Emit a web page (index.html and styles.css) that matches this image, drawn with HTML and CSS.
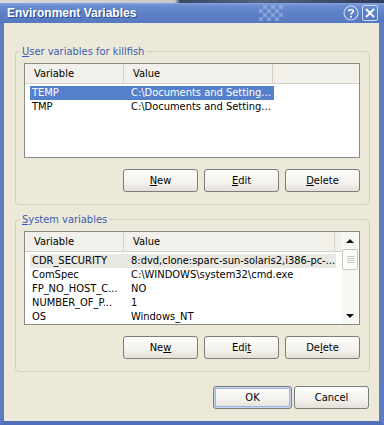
FILE: index.html
```html
<!DOCTYPE html>
<html lang="en">
<head>
    <meta charset="UTF-8">
    <meta name="viewport" content="width=device-width, initial-scale=1.0">
    <title>Environment Variables</title>
    <link rel="stylesheet" href="styles.css">
</head>
<body>
    <div class="desktop-strip"></div>
    <div class="window">
        <div class="titlebar">
            <span class="title">Environment Variables</span>
            <span class="checker"></span>
            <span class="title-buttons">
                <svg class="tb-btn" width="16" height="16" viewBox="0 0 16 16">
                    <circle cx="8" cy="8" r="7" fill="none" stroke="#e4ecfa" stroke-width="1.2" opacity="0.8"/>
                    <path d="M5.6 6.2 C5.6 4.2 10.4 4.2 10.4 6.2 C10.4 7.6 8 7.8 8 9.6" fill="none" stroke="#fff" stroke-width="1.6"/>
                    <rect x="7.1" y="10.8" width="1.8" height="1.8" fill="#fff"/>
                </svg>
                <svg class="tb-btn" width="16" height="16" viewBox="0 0 16 16">
                    <rect x="0.5" y="0.5" width="15" height="15" rx="1.5" fill="none" stroke="#e4ecfa" stroke-width="1" opacity="0.8"/>
                    <path d="M4 4 L12 12 M12 4 L4 12" stroke="#fff" stroke-width="1.8"/>
                </svg>
            </span>
        </div>

        <div class="content">
            <fieldset class="group">
                <legend><u>U</u>ser variables for killfish</legend>
                <div class="list">
                    <div class="list-main">
                        <div class="list-head">
                            <span class="col-var">Variable</span>
                            <span class="col-val user-val">Value</span>
                            <span class="col-fill"></span>
                        </div>
                        <div class="row selected">
                            <span class="cell-var">TEMP</span>
                            <span class="cell-val user-val">C:\Documents and Setting...</span>
                        </div>
                        <div class="row">
                            <span class="cell-var">TMP</span>
                            <span class="cell-val user-val">C:\Documents and Setting...</span>
                        </div>
                    </div>
                </div>
                <div class="btn-row">
                    <button class="btn"><u>N</u>ew</button>
                    <button class="btn"><u>E</u>dit</button>
                    <button class="btn"><u>D</u>elete</button>
                </div>
            </fieldset>

            <fieldset class="group group-sys">
                <legend><u>S</u>ystem variables</legend>
                <div class="list list-sys">
                    <div class="list-main">
                        <div class="list-head">
                            <span class="col-var">Variable</span>
                            <span class="col-val sys-val">Value</span>
                        </div>
                        <div class="row inactive">
                            <span class="cell-var">CDR_SECURITY</span>
                            <span class="cell-val sys-val">8:dvd,clone:sparc-sun-solaris2,i386-pc-...</span>
                        </div>
                        <div class="row">
                            <span class="cell-var">ComSpec</span>
                            <span class="cell-val sys-val">C:\WINDOWS\system32\cmd.exe</span>
                        </div>
                        <div class="row">
                            <span class="cell-var">FP_NO_HOST_C...</span>
                            <span class="cell-val sys-val">NO</span>
                        </div>
                        <div class="row">
                            <span class="cell-var">NUMBER_OF_P...</span>
                            <span class="cell-val sys-val">1</span>
                        </div>
                        <div class="row">
                            <span class="cell-var">OS</span>
                            <span class="cell-val sys-val">Windows_NT</span>
                        </div>
                    </div>
                    <div class="scrollbar">
                        <div class="sb-arrow"><span class="tri-up"></span></div>
                        <div class="sb-track">
                            <div class="sb-thumb"><span></span><span></span><span></span><span></span></div>
                        </div>
                        <div class="sb-arrow"><span class="tri-down"></span></div>
                    </div>
                </div>
                <div class="btn-row">
                    <button class="btn">Ne<u>w</u></button>
                    <button class="btn">Edi<u>t</u></button>
                    <button class="btn">De<u>l</u>ete</button>
                </div>
            </fieldset>

            <div class="dialog-btns">
                <button class="btn btn-default">OK</button>
                <button class="btn">Cancel</button>
            </div>
        </div>
    </div>
</body>
</html>
```

FILE: styles.css
```css
* {
  margin: 0;
  padding: 0;
  box-sizing: border-box;
}

body {
  width: 384px;
  height: 425px;
  overflow: hidden;
  font-family: "DejaVu Sans Condensed", "Liberation Sans", sans-serif;
  font-size: 11px;
  color: #000;
  background-color: #ece9d8;
}

/* Strip of desktop above the window */
.desktop-strip {
  height: 3px;
  background: linear-gradient(to right, #d8d8d4 0, #c8c8c4 175px, #3a4868 180px, #55627f 260px, #2e3a58 100%);
}

/* Window frame and title bar */
.window {
  height: 422px;
  display: flex;
  flex-direction: column;
  border-left: 4px solid #5a7cc2;
  border-right: 5px solid #5a7cc2;
  border-bottom: 4px solid #4f70b8;
  background-color: #ece9d8;
}

.titlebar {
  height: 20px;
  margin: 0 -5px 0 -4px;
  padding: 0 6px 0 7px;
  display: flex;
  align-items: center;
  background: linear-gradient(#86a3dc 0, #6a8ccf 3px, #5d80c6 50%, #5778c0 100%);
}

.title {
  font-family: "Liberation Sans", sans-serif;
  font-weight: bold;
  font-size: 12px;
  color: #fff;
  text-shadow: 1px 1px 0 #2c4a8c;
}

.checker {
  width: 24px;
  height: 16px;
  margin-left: 123px;
  opacity: 0.35;
  background-image: conic-gradient(#c8d8f4 25%, transparent 0 50%, #c8d8f4 0 75%, transparent 0);
  background-size: 8px 8px;
}

.title-buttons {
  margin-left: auto;
  display: flex;
  gap: 3px;
}

.tb-btn {
  display: block;
}

/* Content area */
.content {
  flex: 1;
  padding: 22px 9px 0 11px;
}

.group {
  border: 1px solid #d0d0bf;
  border-radius: 4px;
  padding: 5px 9px 12px 8px;
  min-width: 0;
}

.group legend {
  margin-left: -4px;
  padding: 0 2px;
  color: #3a5cb4;
  line-height: 13px;
}

.group-sys {
  margin-top: 8px;
}

/* List views */
.list {
  height: 95px;
  display: flex;
  background: #fff;
  border: 1px solid #8a8a86;
}

.list-sys {
  height: 94px;
}

.list-main {
  flex: 1;
  overflow: hidden;
}

.list-head {
  height: 20px;
  display: flex;
  background: #f1f0ea;
  border-bottom: 1px solid #d5d2c4;
  margin-bottom: 2px;
}

.list-head span {
  padding-left: 9px;
  line-height: 19px;
  border-right: 1px solid #d5d2c4;
}

.col-var {
  width: 99px;
}

.user-val {
  width: 149px;
}

.sys-val {
  width: 211px;
}

.col-fill {
  flex: 1;
  border-right: none !important;
}

.row {
  height: 14px;
  line-height: 14px;
  display: flex;
  white-space: nowrap;
}

.cell-var {
  width: 99px;
  margin-left: 5px;
  padding-left: 2px;
}

.cell-val {
  padding-left: 7px;
  margin-left: -5px;
}

.cell-val.user-val {
  width: 150px;
}

.cell-val.sys-val {
  width: 212px;
}

.row.selected .cell-var,
.row.selected .cell-val {
  background: #5580cc;
  color: #fff;
}

.row.inactive .cell-var,
.row.inactive .cell-val {
  background: #e9e8e2;
}

/* Scrollbar */
.scrollbar {
  width: 16px;
  margin-right: 1px;
  display: flex;
  flex-direction: column;
  background: #f7f7f3;
}

.sb-arrow {
  height: 17px;
  display: flex;
  justify-content: center;
  align-items: center;
}

.tri-up {
  border-left: 4px solid transparent;
  border-right: 4px solid transparent;
  border-bottom: 4px solid #111;
}

.tri-down {
  border-left: 4px solid transparent;
  border-right: 4px solid transparent;
  border-top: 4px solid #111;
}

.sb-track {
  flex: 1;
}

.sb-thumb {
  height: 21px;
  border: 1px solid #c6c6c0;
  border-radius: 2px;
  background: #fbfbf8;
  display: flex;
  flex-direction: column;
  justify-content: center;
  align-items: center;
  gap: 1px;
}

.sb-thumb span {
  width: 7px;
  height: 1px;
  background: #c9c9c4;
}

/* Buttons */
.btn-row {
  display: flex;
  justify-content: flex-end;
  gap: 6px;
  margin-top: 11px;
}

.btn {
  width: 75px;
  height: 23px;
  font-family: inherit;
  font-size: 11px;
  color: #000;
  border: 1px solid #7c7c78;
  border-radius: 3px;
  background: linear-gradient(#fdfdfb 0, #f3f2ee 60%, #e2e0d8 100%);
}

.dialog-btns {
  display: flex;
  justify-content: flex-end;
  gap: 2px;
  margin-top: 14px;
  padding-right: 1px;
}

.btn-default {
  width: 79px;
  box-shadow: inset 0 0 0 1px #c6d4ee, inset 0 0 0 2px #9db5e4;
}
```
